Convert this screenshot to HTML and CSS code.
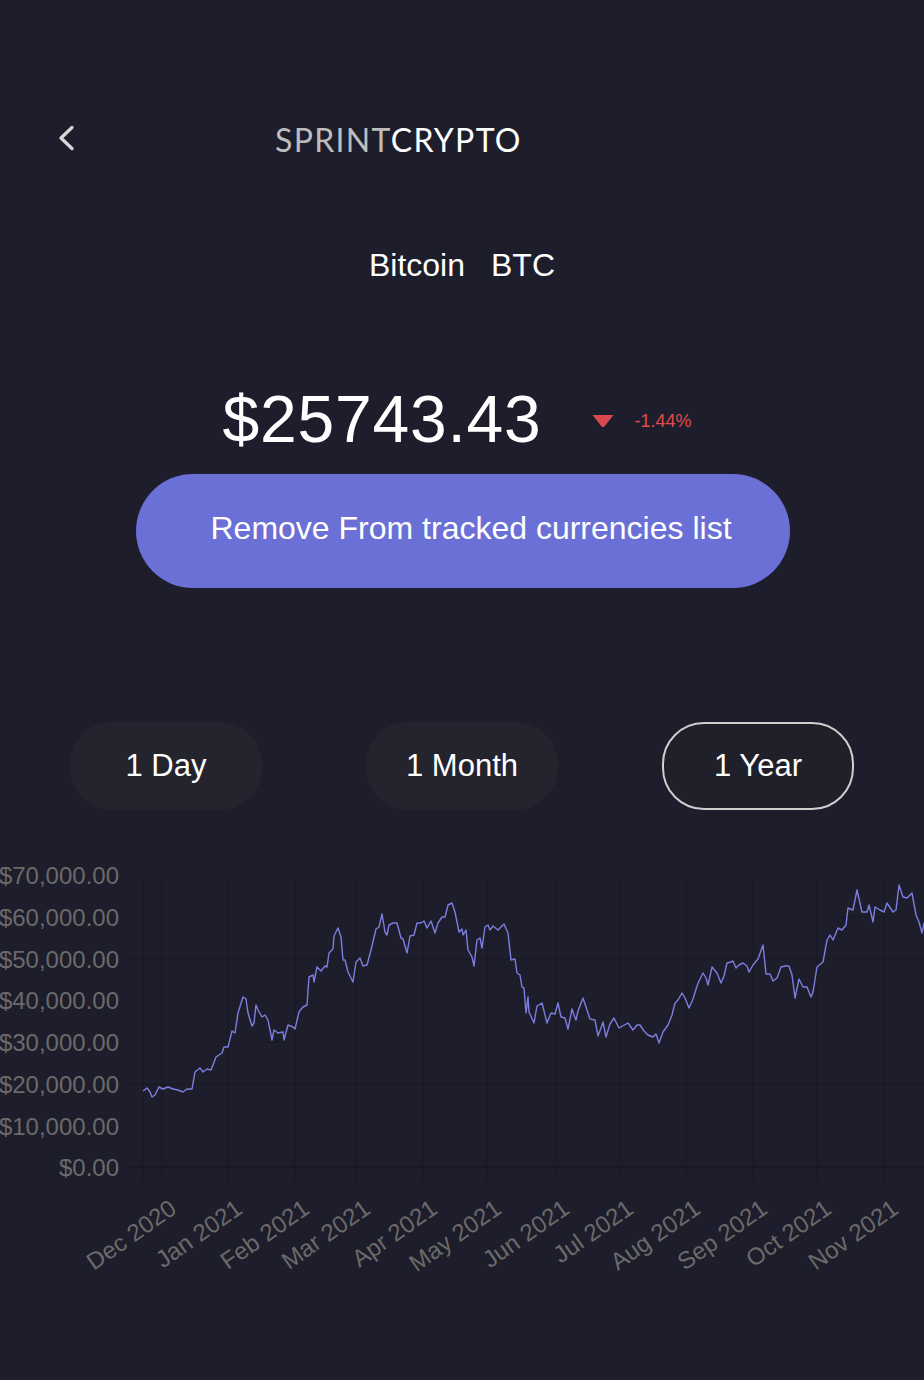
FILE: index.html
```html
<!DOCTYPE html>
<html lang="en">
<head>
<meta charset="utf-8">
<title>SprintCrypto – Bitcoin</title>
<link rel="stylesheet" href="styles.css">
</head>
<body>
<div class="page">
  <header class="topbar">
    <button class="back" aria-label="Back">
      <svg class="back-icon" width="20" height="26" viewBox="0 0 20 26"><path d="M16 0.5 L5 11 L16 21.5" fill="none" stroke="#d6d6d6" stroke-width="3.3" stroke-linecap="round" stroke-linejoin="round"/></svg>
    </button>
    <div class="brand"><span class="brand-a">SPRINT</span><span class="brand-b">CRYPTO</span></div>
  </header>

  <h1 class="coin"><span class="coin-name">Bitcoin</span><span class="coin-sym">BTC</span></h1>

  <div class="price-row">
    <span class="price">$25743.43</span>
    <svg class="tri" width="24" height="14" viewBox="0 0 24 14"><path d="M1.5 1 L22.5 1 L13.6 12.2 Q12 14 10.4 12.2 Z" fill="#d94a4f"/></svg>
    <span class="change">-1.44%</span>
  </div>

  <div class="cta-wrap">
    <button class="cta">Remove From tracked currencies list</button>
  </div>

  <div class="periods">
    <button class="period">1 Day</button>
    <button class="period">1 Month</button>
    <button class="period is-active">1 Year</button>
  </div>

  <div class="chart">
    <svg class="chart-svg" width="924" height="420" viewBox="0 860 924 420">
      <g class="grid">
        <line x1="127" y1="875" x2="924" y2="875"/>
        <line x1="127" y1="917" x2="924" y2="917"/>
        <line x1="127" y1="959" x2="924" y2="959"/>
        <line x1="127" y1="1000" x2="924" y2="1000"/>
        <line x1="127" y1="1042" x2="924" y2="1042"/>
        <line x1="127" y1="1084" x2="924" y2="1084"/>
        <line x1="127" y1="1126" x2="924" y2="1126"/>
        <line x1="143" y1="875" x2="143" y2="1183"/>
        <line x1="162" y1="875" x2="162" y2="1183"/>
        <line x1="228" y1="875" x2="228" y2="1183"/>
        <line x1="295" y1="875" x2="295" y2="1183"/>
        <line x1="356" y1="875" x2="356" y2="1183"/>
        <line x1="423" y1="875" x2="423" y2="1183"/>
        <line x1="487" y1="875" x2="487" y2="1183"/>
        <line x1="555" y1="875" x2="555" y2="1183"/>
        <line x1="619" y1="875" x2="619" y2="1183"/>
        <line x1="686" y1="875" x2="686" y2="1183"/>
        <line x1="753" y1="875" x2="753" y2="1183"/>
        <line x1="817" y1="875" x2="817" y2="1183"/>
        <line x1="884" y1="875" x2="884" y2="1183"/>
      </g>
      <line class="axis" x1="127" y1="1167" x2="924" y2="1167"/>
      <g class="ylabels">
        <text x="119" y="883.6">$70,000.00</text>
        <text x="119" y="925.6">$60,000.00</text>
        <text x="119" y="967.6">$50,000.00</text>
        <text x="119" y="1008.6">$40,000.00</text>
        <text x="119" y="1050.6">$30,000.00</text>
        <text x="119" y="1092.6">$20,000.00</text>
        <text x="119" y="1134.6">$10,000.00</text>
        <text x="119" y="1175.6">$0.00</text>
      </g>
      <g class="xlabels">
        <text transform="translate(173 1205) rotate(-35)" dy="8.6">Dec 2020</text>
        <text transform="translate(239 1205) rotate(-35)" dy="8.6">Jan 2021</text>
        <text transform="translate(306 1205) rotate(-35)" dy="8.6">Feb 2021</text>
        <text transform="translate(367 1205) rotate(-35)" dy="8.6">Mar 2021</text>
        <text transform="translate(434 1205) rotate(-35)" dy="8.6">Apr 2021</text>
        <text transform="translate(498 1205) rotate(-35)" dy="8.6">May 2021</text>
        <text transform="translate(566 1205) rotate(-35)" dy="8.6">Jun 2021</text>
        <text transform="translate(630 1205) rotate(-35)" dy="8.6">Jul 2021</text>
        <text transform="translate(697 1205) rotate(-35)" dy="8.6">Aug 2021</text>
        <text transform="translate(764 1205) rotate(-35)" dy="8.6">Sep 2021</text>
        <text transform="translate(828 1205) rotate(-35)" dy="8.6">Oct 2021</text>
        <text transform="translate(895 1205) rotate(-35)" dy="8.6">Nov 2021</text>
      </g>
      <polyline class="series" points="143,1091 147,1088 150,1092 152,1097 155,1095 159,1087 163,1089 168,1087 173,1089 178,1090 183,1092 187,1089 192,1089 195,1072 200,1068 203,1072 207,1069 211,1070 216,1057 222,1053 224,1047 228,1047 232,1031 235,1033 238,1013 243,997 246,999 248,1013 252,1026 254,1023 256,1005 258,1010 262,1017 265,1015 268,1020 272,1040 274,1030 278,1033 283,1032 284,1040 288,1025 293,1027 295,1029 299,1012 303,1007 307,1005 309,977 313,975 314,982 317,967 321,971 325,966 327,967 329,953 333,949 334,936 338,928 341,937 343,960 345,960 348,972 353,982 356,962 360,958 363,966 367,965 371,950 376,929 379,927 382,914 385,932 387,935 389,925 393,923 397,923 401,938 403,939 407,953 410,936 414,935 417,923 421,923 424,921 427,928 431,921 435,933 438,923 442,917 445,917 448,905 452,903 455,912 459,932 462,929 463,935 466,930 468,950 472,957 474,966 477,940 480,938 482,948 485,927 488,925 490,930 493,926 498,930 504,924 508,933 511,960 515,959 517,973 520,975 522,987 524,988 526,1013 528,997 529,1012 534,1023 537,1006 542,1003 547,1023 551,1013 555,1014 558,1003 561,1017 565,1018 568,1029 572,1009 574,1015 576,1020 578,1011 583,998 586,1007 590,1019 595,1020 598,1036 601,1028 603,1022 606,1037 610,1024 614,1018 619,1028 628,1023 633,1030 637,1025 640,1025 644,1031 648,1035 653,1037 656,1034 659,1043 663,1032 668,1025 672,1015 675,1003 678,1000 682,993 685,998 689,1008 693,999 697,986 699,981 703,973 706,978 708,985 712,967 717,973 721,983 724,976 727,963 731,962 733,961 736,968 739,965 743,963 747,966 749,972 753,965 758,959 763,945 766,974 770,974 773,981 777,978 781,967 785,966 789,966 792,975 795,998 799,979 803,987 807,987 811,997 813,992 817,967 823,962 827,940 830,935 833,940 838,928 842,930 846,925 848,908 853,910 857,890 862,912 867,912 869,905 873,922 875,907 880,910 884,912 887,903 893,912 896,910 899,885 903,897 907,898 912,893 916,915 919,922 922,933 924,923 930,925"/>
    </svg>
  </div>
</div>
</body>
</html>
```

FILE: styles.css
```css
html, body {
  margin: 0;
  padding: 0;
  background: #1e1d2b;
}

body {
  font-family: "Liberation Sans", Arial, Helvetica, sans-serif;
  color: #ffffff;
}

.page {
  width: 924px;
  min-height: 1380px;
  overflow: hidden;
}

/* header */
.topbar {
  display: flex;
  align-items: center;
  height: 40px;
  padding: 120px 0 0 56px;
}

.back {
  display: block;
  width: 20px;
  height: 26px;
  padding: 0;
  margin: 0;
  border: 0;
  background: none;
  cursor: pointer;
}

.back-icon {
  display: block;
  overflow: visible;
}

.brand {
  margin-left: 199px;
  font-family: "Lato", "Liberation Sans", sans-serif;
  font-size: 32px;
  line-height: 40px;
  letter-spacing: 1.3px;
}

.brand-a { color: #bdbdbd; }
.brand-b { color: #ffffff; }

/* coin */
.coin {
  display: flex;
  justify-content: center;
  gap: 26px;
  margin: 85px 0 0;
  font-size: 32px;
  font-weight: 400;
  line-height: 40px;
}

/* price */
.price-row {
  display: flex;
  justify-content: center;
  align-items: center;
  height: 66px;
  margin-top: 101px;
  padding-right: 10px;
}

.price {
  font-size: 66px;
  line-height: 66px;
  letter-spacing: 0.8px;
}

.tri {
  display: block;
  margin-left: 49px;
  margin-top: 3px;
}

.change {
  margin-left: 20px;
  font-size: 18px;
  line-height: 18px;
  color: #e04a4f;
  margin-top: 3px;
}

/* call to action */
.cta-wrap {
  display: flex;
  justify-content: center;
  margin-top: 22px;
  padding-left: 2px;
}

.cta {
  width: 654px;
  height: 114px;
  padding: 0 0 5px 16px;
  border: 0;
  border-radius: 57px;
  background: #6b70d6;
  color: #ffffff;
  font-family: "Liberation Sans", Arial, Helvetica, sans-serif;
  font-size: 32px;
  cursor: pointer;
}

/* periods */
.periods {
  display: grid;
  grid-template-columns: repeat(3, 1fr);
  justify-items: center;
  padding: 0 18px;
  margin-top: 134px;
}

.period {
  width: 192px;
  height: 88px;
  padding: 0;
  border: 2px solid #23242d;
  border-radius: 42px;
  background: #23242d;
  color: #ffffff;
  font-family: "Liberation Sans", Arial, Helvetica, sans-serif;
  font-size: 31px;
  cursor: pointer;
}

.period.is-active {
  border-color: #cfcfcf;
  background: #1f202a;
}

/* chart */
.chart {
  margin-top: 50px;
}

.chart-svg {
  display: block;
}

.grid line {
  stroke: #191824;
  stroke-width: 1;
}

.axis {
  stroke: #171621;
  stroke-width: 1.5;
}

.ylabels text,
.xlabels text {
  font-family: "Liberation Sans", Arial, Helvetica, sans-serif;
  font-size: 24px;
  fill: #6a6a6a;
  text-anchor: end;
}

.series {
  fill: none;
  stroke: #7b7fe0;
  stroke-width: 1.4;
  stroke-linejoin: round;
}
```
